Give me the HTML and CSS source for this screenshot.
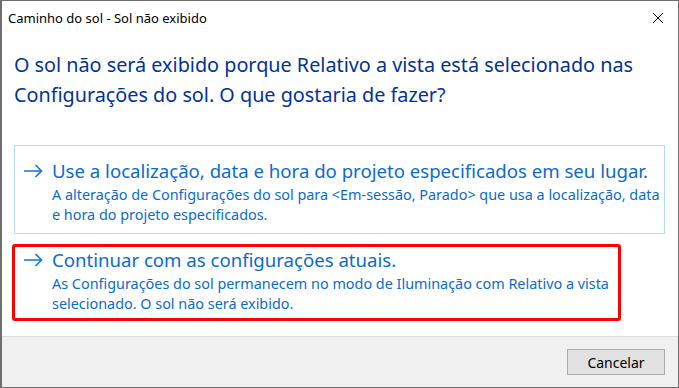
FILE: index.html
```html
<!DOCTYPE html>
<html lang="pt">
<head>
<meta charset="utf-8">
<title>Caminho do sol - Sol não exibido</title>
<link rel="stylesheet" href="styles.css">
</head>
<body>
<div class="window">
  <div class="titlebar">
    <span class="title">Caminho do sol - Sol não exibido</span>
    <svg class="close" width="12" height="12" viewBox="0 0 12 12"><path d="M1 1 L11 11 M11 1 L1 11" stroke="#000" stroke-width="1" fill="none"/></svg>
  </div>
  <div class="content">
    <p class="instruction">O sol não será exibido porque Relativo a vista está selecionado nas Configurações do sol. O que gostaria de fazer?</p>
    <div class="option option-first">
      <svg class="arrow" width="20" height="14" viewBox="0 0 20 14"><path d="M1 7 H18.5 M12.5 1 L18.5 7 L12.5 13" stroke="#1177d4" stroke-width="1.6" fill="none"/></svg>
      <div class="option-text">
        <div class="option-title">Use a localização, data e hora do projeto especificados em seu lugar.</div>
        <div class="option-desc">A alteração de Configurações do sol para &lt;Em-sessão, Parado&gt; que usa a localização, data e hora do projeto especificados.</div>
      </div>
    </div>
    <div class="option option-marked">
      <svg class="arrow" width="20" height="14" viewBox="0 0 20 14"><path d="M1 7 H18.5 M12.5 1 L18.5 7 L12.5 13" stroke="#1177d4" stroke-width="1.6" fill="none"/></svg>
      <div class="option-text">
        <div class="option-title">Continuar com as configurações atuais.</div>
        <div class="option-desc">As Configurações do sol permanecem no modo de Iluminação com Relativo a vista selecionado. O sol não será exibido.</div>
      </div>
    </div>
  </div>
  <div class="footer">
    <button class="btn">Cancelar</button>
  </div>
</div>
</body>
</html>
```
FILE: styles.css
```css
html, body {
  margin: 0;
  padding: 0;
  background: #fff;
}
.window {
  width: 679px;
  height: 388px;
  box-sizing: border-box;
  border: 1px solid #6e6e6e;
  border-left-width: 2px;
  display: flex;
  flex-direction: column;
  background: #fff;
  font-family: "Noto Sans", "Open Sans", sans-serif;
}
.titlebar {
  height: 33px;
  flex: none;
  display: flex;
  align-items: center;
  justify-content: space-between;
  padding: 0 14px 0 6px;
}
.title {
  font-size: 13px;
  color: #000;
}
.close {
  display: block;
}
.content {
  flex: 1;
  padding: 16px 0 0 12px;
}
.instruction {
  margin: 0;
  width: 640px;
  font-size: 19.8px;
  line-height: 30px;
  color: #003399;
}
.option {
  display: grid;
  grid-template-columns: 29px 1fr;
  align-items: start;
  box-sizing: border-box;
}
.option-first {
  margin: 35px 0 0 0;
  width: 651px;
  border: 1px solid #b3dcf2;
  padding: 13px 2px 9px 8px;
}
.option-marked {
  margin: 10px 0 0 -2px;
  width: 609px;
  border: 3px solid #ff0000;
  border-radius: 3px;
  padding: 1px 0 5px 8px;
}
.arrow {
  display: block;
  margin-top: 5px;
}
.option-title {
  font-size: 18.6px;
  line-height: 24px;
  color: #0a6bd0;
}
.option-desc {
  margin-top: 2px;
  font-size: 14.4px;
  line-height: 19.5px;
  color: #0a6bd0;
}
.footer {
  height: 51px;
  flex: none;
  box-sizing: border-box;
  border-top: 1px solid #dcdcdc;
  background: #f0f0f0;
  display: flex;
  justify-content: flex-end;
  align-items: flex-start;
  padding: 12px 13px 0 0;
}
.btn {
  width: 98px;
  height: 26px;
  background: #e1e1e1;
  border: 1px solid #adadad;
  border-radius: 0;
  font-family: "Noto Sans", "Open Sans", sans-serif;
  font-size: 14px;
  color: #000;
  padding: 0;
}
```
